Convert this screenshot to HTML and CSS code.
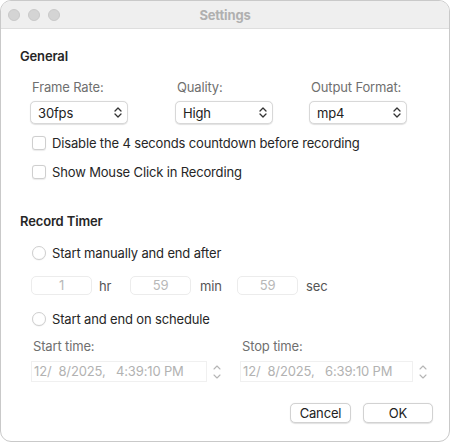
FILE: index.html
```html
<!DOCTYPE html>
<html>
<head>
<meta charset="utf-8">
<link rel="stylesheet" href="styles.css">
</head>
<body>
<div class="window">
  <div class="titlebar">
    <div class="lights"><span class="light"></span><span class="light"></span><span class="light"></span></div>
    <div class="title">Settings</div>
  </div>
  <div class="content">
    <div class="section-title">General</div>
    <div class="selects">
      <div class="field f1">
        <div class="label">Frame Rate:</div>
        <div class="select"><span>30fps</span>
          <svg class="chev" width="8" height="11" viewBox="0 0 8 11"><path d="M1 4 L4 1 L7 4 M1 7 L4 10 L7 7" fill="none" stroke="#333" stroke-width="1.3" stroke-linecap="round" stroke-linejoin="round"/></svg>
        </div>
      </div>
      <div class="field f2">
        <div class="label">Quality:</div>
        <div class="select"><span>High</span>
          <svg class="chev" width="8" height="11" viewBox="0 0 8 11"><path d="M1 4 L4 1 L7 4 M1 7 L4 10 L7 7" fill="none" stroke="#333" stroke-width="1.3" stroke-linecap="round" stroke-linejoin="round"/></svg>
        </div>
      </div>
      <div class="field f3">
        <div class="label">Output Format:</div>
        <div class="select"><span>mp4</span>
          <svg class="chev" width="8" height="11" viewBox="0 0 8 11"><path d="M1 4 L4 1 L7 4 M1 7 L4 10 L7 7" fill="none" stroke="#333" stroke-width="1.3" stroke-linecap="round" stroke-linejoin="round"/></svg>
        </div>
      </div>
    </div>
    <div class="check-row first"><span class="checkbox"></span><span class="text">Disable the 4 seconds countdown before recording</span></div>
    <div class="check-row"><span class="checkbox"></span><span class="text">Show Mouse Click in Recording</span></div>

    <div class="section-title timer">Record Timer</div>
    <div class="check-row radio-row"><span class="radio"></span><span class="text">Start manually and end after</span></div>
    <div class="duration">
      <div class="num">1</div><div class="unit u-hr">hr</div>
      <div class="num">59</div><div class="unit u-min">min</div>
      <div class="num">59</div><div class="unit">sec</div>
    </div>
    <div class="check-row radio-row2"><span class="radio"></span><span class="text">Start and end on schedule</span></div>
    <div class="times">
      <div class="time-col c1">
        <div class="label">Start time:</div>
        <div class="date-wrap">
          <div class="date">12/&nbsp; 8/2025,&nbsp;&nbsp; 4:39:10 PM</div>
          <div class="stepper">
            <svg width="12" height="20" viewBox="0 0 12 20"><path d="M3 7 L6 4 L9 7 M3 13 L6 16 L9 13" fill="none" stroke="#b5b5b5" stroke-width="1.1" stroke-linecap="round" stroke-linejoin="round"/></svg>
          </div>
        </div>
      </div>
      <div class="time-col c2">
        <div class="label">Stop time:</div>
        <div class="date-wrap">
          <div class="date w2">12/&nbsp; 8/2025,&nbsp;&nbsp; 6:39:10 PM</div>
          <div class="stepper">
            <svg width="12" height="20" viewBox="0 0 12 20"><path d="M3 7 L6 4 L9 7 M3 13 L6 16 L9 13" fill="none" stroke="#b5b5b5" stroke-width="1.1" stroke-linecap="round" stroke-linejoin="round"/></svg>
          </div>
        </div>
      </div>
    </div>
    <div class="buttons">
      <div class="btn cancel">Cancel</div>
      <div class="btn ok">OK</div>
    </div>
  </div>
</div>
</body>
</html>
```
FILE: styles.css
```css
* { box-sizing: border-box; }
html, body { margin: 0; padding: 0; background: #ffffff; }
body {
  width: 450px;
  height: 443px;
  font-family: Inter, "Liberation Sans", sans-serif;
  font-size: 13px;
  letter-spacing: -0.15px;
  color: #262626;
  overflow: hidden;
}
.window {
  width: 450px;
  height: 442px;
  border: 1px solid #c9c9c9;
  border-radius: 11px;
  background: #ffffff;
  overflow: hidden;
}
.titlebar {
  height: 28px;
  background: #efefef;
  border-bottom: 1px solid #dedede;
  display: flex;
  align-items: center;
  position: relative;
}
.lights {
  display: flex;
  gap: 8px;
  padding-left: 7px;
}
.light {
  width: 12px;
  height: 12px;
  border-radius: 50%;
  background: #d4d4d4;
  border: 0.5px solid #c8c8c8;
}
.title {
  position: absolute;
  left: 0;
  right: 0;
  text-align: center;
  font-weight: 700;
  color: #b0b0b0;
  font-size: 13px;
}
.content {
  padding: 19px 16px 0 19px;
}
.section-title {
  font-weight: 600;
  line-height: 16px;
  height: 16px;
}
.selects {
  display: flex;
  margin-top: 15px;
}
.field { display: flex; flex-direction: column; }
.f1 { padding-left: 10px; width: 155px; }
.f2 { width: 134px; }
.f3 { width: 100px; }
.label {
  color: #6f6f6f;
  line-height: 16px;
  padding-left: 2px;
}
.select {
  margin-top: 6px;
  width: 98px;
  height: 23px;
  border: 1px solid #d8d8d8;
  border-radius: 5px;
  background: #fff;
  box-shadow: 0 0.5px 1px rgba(0,0,0,0.12);
  display: flex;
  align-items: center;
  justify-content: space-between;
  padding: 0 5px 0 7px;
  color: #222;
}
.chev { display: block; }
.check-row {
  display: flex;
  align-items: center;
  height: 20px;
  margin-top: 9px;
  padding-left: 12px;
}
.check-row.first { margin-top: 9px; }
.checkbox {
  width: 14px;
  height: 14px;
  border: 1px solid #cfcfcf;
  border-radius: 3px;
  background: #fff;
  box-shadow: 0 0.5px 1px rgba(0,0,0,0.08);
}
.radio {
  width: 14px;
  height: 14px;
  border: 1px solid #cfcfcf;
  border-radius: 50%;
  background: #fff;
  box-shadow: 0 0.5px 1px rgba(0,0,0,0.08);
}
.check-row .text { margin-left: 6px; color: #262626; }
.section-title.timer { margin-top: 31px; }
.radio-row { margin-top: 14px; }
.duration {
  display: flex;
  align-items: center;
  margin-top: 13px;
  padding-left: 11px;
}
.num {
  width: 61px;
  height: 19px;
  border: 1px solid #ececec;
  border-radius: 5px;
  text-align: center;
  line-height: 17px;
  color: #b8b8b8;
}
.unit { color: #555; margin-left: 8px; line-height: 16px; }
.u-hr { width: 31px; margin-left: 7px; }
.u-min { width: 37px; margin-left: 9px; }
.radio-row2 { margin-top: 14px; }
.times {
  display: flex;
  margin-top: 9px;
  padding-left: 11px;
}
.time-col { display: flex; flex-direction: column; }
.c1 { width: 209px; }
.date-wrap {
  display: flex;
  align-items: center;
  margin-top: 7px;
}
.date {
  width: 176px;
  height: 21px;
  border: 1px solid #f0f0f0;
  line-height: 19px;
  padding-left: 2px;
  color: #b2b2b2;
  white-space: nowrap;
}
.date.w2 { width: 173px; }
.stepper {
  margin-left: 3px;
  width: 14px;
  height: 21px;
  display: flex;
  align-items: center;
  justify-content: center;
}
.stepper svg { display: block; }
.buttons {
  display: flex;
  justify-content: flex-end;
  gap: 12px;
  margin-top: 21px;
  padding-right: 0;
}
.btn {
  height: 20px;
  border: 1px solid #d2d2d2;
  border-radius: 5px;
  background: #fff;
  box-shadow: 0 0.5px 1px rgba(0,0,0,0.12);
  text-align: center;
  line-height: 18px;
  color: #222;
}
.cancel { width: 61px; }
.ok { width: 70px; }
```
